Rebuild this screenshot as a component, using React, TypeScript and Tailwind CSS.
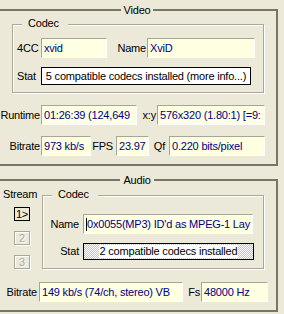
import React from "react";

function Field({ className = "", children }: { className?: string; children?: React.ReactNode }) {
  return (
    <div
      className={`flex items-center overflow-hidden whitespace-nowrap border border-t-[#a7a597] border-l-[#a7a597] border-b-white border-r-white bg-[#ffffe1] pl-[2px] text-[#000080] ${className}`}
    >
      {children}
    </div>
  );
}

export default function App() {
  return (
    <div className="w-[284px] h-[314px] overflow-hidden bg-[#ece9d8] font-['Liberation_Sans',Arial,sans-serif] text-[11px] tracking-[-0.2px] leading-[13px] text-black">
      {/* Video group */}
      <div className="relative ml-[-4px] mt-[9px] w-[282px] h-[157px] border-2 border-[#77756a]">
        <span className="absolute left-0 right-0 -top-[7px] mx-auto w-fit bg-[#ece9d8] px-[3px]">Video</span>

        <div className="relative ml-[14px] mt-[13px] w-[252px] h-[69px] border border-[#aca899] shadow-[inset_1px_1px_0_#fff,1px_1px_0_#fff]">
          <span className="absolute left-[9px] -top-[8px] bg-[#ece9d8] pl-[6px] pr-[9px]">Codec</span>
          <div className="flex mt-[13px] h-[20px]">
            <div className="w-[28px] pl-[4px] flex items-center">4CC</div>
            <Field className="w-[66px] h-[20px]">xvid</Field>
            <div className="w-[40px] pr-[1px] flex items-center justify-end">Name</div>
            <Field className="w-[108px] h-[20px]">XviD</Field>
          </div>
          <div className="flex mt-[9px] h-[18px]">
            <div className="w-[28px] pl-[4px] flex items-center">Stat</div>
            <div className="w-[210px] h-[18px] border border-black bg-white flex items-center justify-center whitespace-nowrap overflow-hidden">
              5 compatible codecs installed (more info...)
            </div>
          </div>
        </div>

        <div className="flex mt-[12px] h-[20px]">
          <div className="w-[43px] pr-[1px] flex items-center justify-end">Runtime</div>
          <Field className="w-[96px] h-[20px]">01:26:39 (124,649</Field>
          <div className="w-[20px] pr-[1px] flex items-center justify-end">x:y</div>
          <Field className="w-[108px] h-[20px]">576x320 (1.80:1) [=9:</Field>
        </div>

        <div className="flex mt-[11px] h-[20px]">
          <div className="w-[43px] pr-[1px] flex items-center justify-end">Bitrate</div>
          <Field className="w-[50px] h-[20px]">973 kb/s</Field>
          <div className="w-[25px] pr-[3px] flex items-center justify-end">FPS</div>
          <Field className="w-[33px] h-[20px]">23.97</Field>
          <div className="w-[20px] pr-[4px] flex items-center justify-end">Qf</div>
          <Field className="w-[96px] h-[20px]">0.220 bits/pixel</Field>
        </div>
      </div>

      {/* Audio group */}
      <div className="relative ml-[-4px] mt-[13px] w-[282px] h-[133px] border-2 border-[#77756a]">
        <span className="absolute left-0 right-0 -top-[7px] mx-auto w-fit bg-[#ece9d8] px-[3px]">Audio</span>

        <div className="flex">
          <div className="w-[44px] flex flex-col">
            <div className="mt-[7px] pl-[5px]">Stream</div>
            <div className="mt-[6px] ml-[16px] flex flex-col gap-[10px]">
              <div className="w-[16px] h-[14px] border border-black flex items-center justify-center">1&gt;</div>
              <div className="w-[16px] h-[14px] border border-[#aca899] shadow-[inset_1px_1px_0_#fff,1px_1px_0_#fff] flex items-center justify-center text-[#aca899] [text-shadow:1px_1px_0_#fff]">2</div>
              <div className="w-[16px] h-[14px] border border-[#aca899] shadow-[inset_1px_1px_0_#fff,1px_1px_0_#fff] flex items-center justify-center text-[#aca899] [text-shadow:1px_1px_0_#fff]">3</div>
            </div>
          </div>

          <div className="relative mt-[14px] w-[222px] h-[74px] border border-[#aca899] shadow-[inset_1px_1px_0_#fff,1px_1px_0_#fff]">
            <span className="absolute left-[9px] -top-[8px] bg-[#ece9d8] pl-[6px] pr-[9px]">Codec</span>
            <div className="flex mt-[18px] h-[20px]">
              <div className="w-[40px] pr-[4px] flex items-center justify-end">Name</div>
              <Field className="w-[170px] h-[20px]">
                <span className="inline-block w-[1px] h-[13px] bg-black shrink-0" />
                0x0055(MP3) ID'd as MPEG-1 Lay
              </Field>
            </div>
            <div className="flex mt-[9px] h-[17px]">
              <div className="w-[40px] pr-[4px] flex items-center justify-end">Stat</div>
              <div className="w-[171px] h-[17px] border border-black flex items-center justify-center whitespace-nowrap overflow-hidden bg-[image:repeating-conic-gradient(#c8c5b8_0%_25%,#fff_0%_50%)] bg-[length:2px_2px]">
                <span className="bg-white px-[1px]">2 compatible codecs installed</span>
              </div>
            </div>
          </div>
        </div>

        <div className="flex mt-[13px] h-[20px]">
          <div className="w-[41px] pr-[2px] flex items-center justify-end">Bitrate</div>
          <Field className="w-[144px] h-[20px]">149 kb/s (74/ch, stereo) VB</Field>
          <div className="w-[18px] pr-[1px] flex items-center justify-end">Fs</div>
          <Field className="w-[67px] h-[20px]">48000 Hz</Field>
        </div>
      </div>
    </div>
  );
}
